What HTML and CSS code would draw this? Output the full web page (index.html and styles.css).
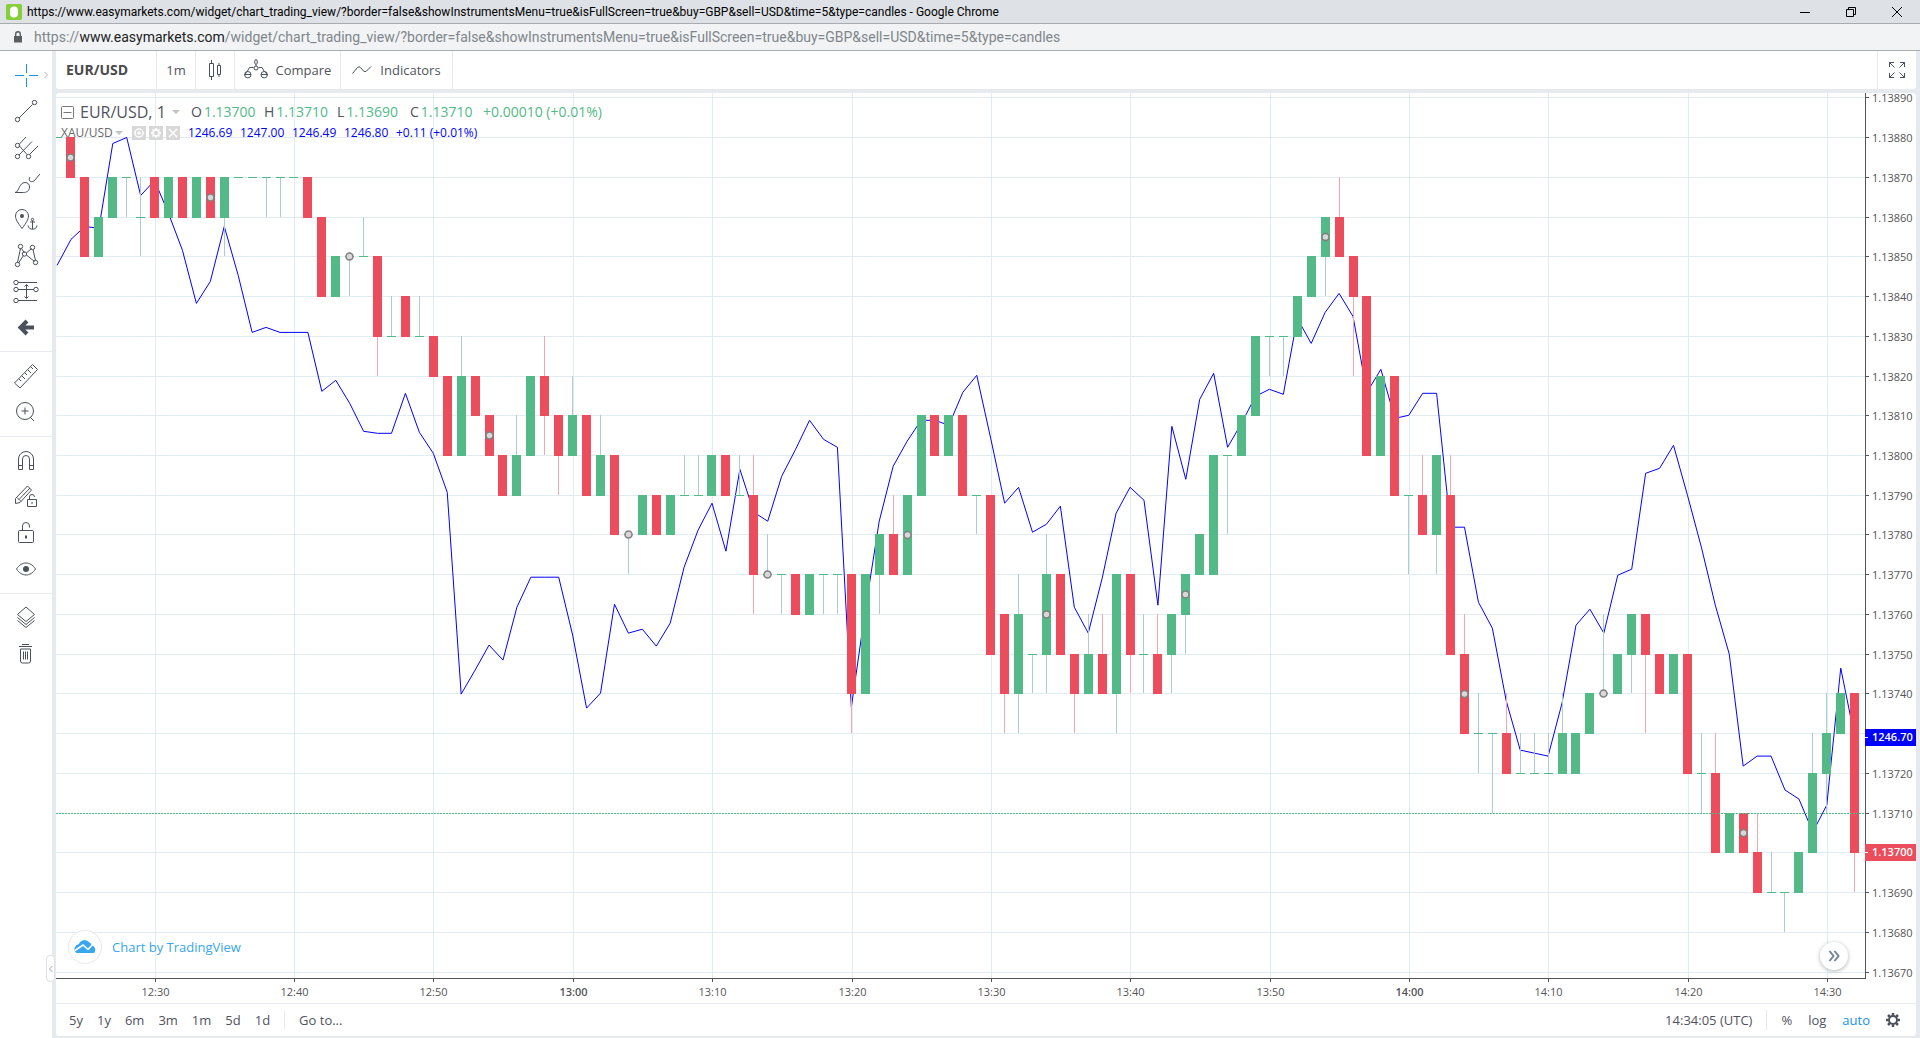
FILE: index.html
```html
<!DOCTYPE html>
<html lang="en">
<head>
<meta charset="utf-8">
<meta name="viewport" content="width=device-width, initial-scale=1">
<title>EUR/USD chart</title>
<link rel="stylesheet" href="styles.css">
</head>
<body>
<header class="titlebar">
  <svg class="favicon" viewBox="0 0 16 16"><rect width="16" height="16" rx="2" fill="#86cf3a"/><path d="M4 7a4 4 0 0 1 8-1v3a4 4 0 0 1-8 1z" fill="#fff"/></svg>
  <h1 class="window-title">https://www.easymarkets.com/widget/chart_trading_view/?border=false&amp;showInstrumentsMenu=true&amp;isFullScreen=true&amp;buy=GBP&amp;sell=USD&amp;time=5&amp;type=candles - Google Chrome</h1>
  <div class="window-controls">
    <button type="button" aria-label="Minimize"><svg width="12" height="12" viewBox="0 0 12 12"><path d="M1 6.5h10"/></svg></button>
    <button type="button" aria-label="Restore"><svg width="12" height="12" viewBox="0 0 12 12"><path d="M1.500 3.500h7v7h-7zM3.500 3.500v-2h7v7h-2"/></svg></button>
    <button type="button" aria-label="Close"><svg width="12" height="12" viewBox="0 0 12 12"><path d="M1 1l10 10M11 1L1 11"/></svg></button>
  </div>
</header>
<div class="addressbar">
  <svg class="padlock" width="10" height="12" viewBox="0 0 10 12"><path d="M1 5h8v6.500H1z" fill="#5a5d61"/><path d="M2.700 5V3a2.300 2.300 0 0 1 4.600 0v2" fill="none" stroke="#5a5d61" stroke-width="1.400"/></svg>
  <p class="url">https://<span class="domain">www.easymarkets.com</span>/widget/chart_trading_view/?border=false&amp;showInstrumentsMenu=true&amp;isFullScreen=true&amp;buy=GBP&amp;sell=USD&amp;time=5&amp;type=candles</p>
</div>

<div class="workspace">
  <nav class="tools" aria-label="Drawing tools">
    <div class="tool-group">
      <button type="button" class="active" aria-label="Cross"><svg viewBox="0 0 28 28"><path d="M14.500 3v9M14.500 17v9M3 14.500h9M17 14.500h9"/></svg><svg class="more" viewBox="0 0 4 8"><path d="M.5 1l3 3-3 3"/></svg></button>
      <button type="button" aria-label="Trend line"><svg viewBox="0 0 28 28"><path d="M7 21L20.500 7.500"/><circle cx="5.500" cy="22.500" r="2.200"/><circle cx="22.500" cy="5.500" r="2.200"/></svg></button>
      <button type="button" aria-label="Pitchfork"><svg viewBox="0 0 28 28"><path d="M7 22L20 8.500M7.500 11l6.500-7M18 21l8-8M7 12.500l8 9"/><circle cx="5.500" cy="12.500" r="2.200"/><circle cx="5.500" cy="23.500" r="2.200"/><circle cx="16.500" cy="23.500" r="2.200"/></svg></button>
      <button type="button" aria-label="Brush"><svg viewBox="0 0 28 28"><path d="M3 23.500c4 0 4-10 10-10 3 0 4.500 2 4.500 4.500 0 4-3 5.500-6 5.500zM18 8c-2 3 0 6 4 4l6-7"/></svg></button>
      <button type="button" aria-label="Text"><svg viewBox="0 0 28 28"><path d="M10 23.500C6 18 3.500 14.500 3.500 11a6.500 6.500 0 0 1 13 0c0 3.500-2.500 7-6.500 12.500zM20.500 15.500V24M18 17h5M16 20.500c.5 5 8.500 5 9 0"/><circle cx="20.500" cy="14.500" r="1.200"/><circle class="solid" cx="10" cy="11" r="2"/></svg></button>
      <button type="button" aria-label="Patterns"><svg viewBox="0 0 28 28"><path d="M5.500 21.500l3-14M6.500 22l5-7.500M9.500 7.500l3 4.500M14.500 12l5-4.500M14.500 14l8 6.500M21 8.500l2.500 11"/><circle cx="8.500" cy="5.500" r="2.200"/><circle cx="20.500" cy="6.500" r="2.200"/><circle cx="12.500" cy="13" r="2.200"/><circle cx="5.500" cy="23.500" r="2.200"/><circle cx="23.500" cy="21.500" r="2.200"/></svg></button>
      <button type="button" aria-label="Prediction"><svg viewBox="0 0 28 28"><path d="M6 5.500h19M6 12.500h16M6 23.500h19M14.500 8v13M12.500 9.500l2-2 2 2M12.500 19.500l2 2 2-2"/><circle cx="4" cy="5.500" r="2.200"/><circle cx="4" cy="12.500" r="2.200"/><circle cx="24" cy="12.500" r="2.200"/><circle cx="4" cy="23.500" r="2.200"/></svg></button>
      <button type="button" aria-label="Back"><svg viewBox="0 0 28 28"><path class="thick" d="M22 14.500H9M15 8l-6.500 6.500 6.500 6.500"/></svg></button>
    </div>
    <div class="tool-group">
      <button type="button" aria-label="Measure"><svg viewBox="0 0 28 28"><path d="M2.500 21L20.500 2.500l5 5L8 26zM7 17l2 2M10 14l3 3M13 11l2 2M16 8l3 3M19 5l2 2"/></svg></button>
      <button type="button" aria-label="Zoom in"><svg viewBox="0 0 28 28"><circle cx="13" cy="13" r="8.500"/><path d="M18 19l4 4M13 9.500v7M9.500 13h7"/></svg></button>
    </div>
    <div class="tool-group">
      <button type="button" aria-label="Magnet"><svg viewBox="0 0 28 28"><path d="M6.500 22.500V12a7.500 7.500 0 0 1 15 0v10.500h-4V12a3.500 3.500 0 0 0-7 0v10.500zM6.500 18.500h4M17.500 18.500h4"/></svg></button>
      <button type="button" aria-label="Lock drawing mode"><svg viewBox="0 0 28 28"><path d="M3.500 20.500v-5L15.500 3l4 4L8 19.500zM5 14.500l4 4M7 16.500L18 5M15.500 16.500h9v7h-9zM17.500 16.500V14a2.500 2.500 0 0 1 5 0M20 19v2"/></svg></button>
      <button type="button" aria-label="Lock all drawings"><svg viewBox="0 0 28 28"><rect x="6.500" y="11.500" width="15" height="12" rx="1"/><path d="M10.500 11.500V7a3.500 3.500 0 0 1 7 0v1.500"/><path class="bold" d="M14 16.500v3"/></svg></button>
      <button type="button" aria-label="Hide all drawings"><svg viewBox="0 0 28 28"><path d="M4.500 14c5-8 14-8 19 0-5 8-14 8-19 0z"/><circle class="solid" cx="14" cy="14" r="3"/></svg></button>
    </div>
    <div class="tool-group">
      <button type="button" aria-label="Object tree"><svg viewBox="0 0 28 28"><path d="M14 3l8.500 7.500L14 17.500 5.500 10.500zM5.500 13.500l8.500 7 8.500-7M5.500 16.500l8.500 7 8.500-7"/></svg></button>
      <button type="button" aria-label="Remove"><svg viewBox="0 0 28 28"><path d="M7 6.500h13M10 4.500h7M8.500 9v12a2 2 0 0 0 2 2h6a2 2 0 0 0 2-2V9zM11.500 11.500v8M13.500 11.500v8M15.500 11.500v8"/></svg></button>
    </div>
    <button type="button" class="collapse" aria-label="Collapse toolbar"><svg viewBox="0 0 4 8"><path d="M3.500 1l-3 3 3 3"/></svg></button>
  </nav>

  <main class="chart-area">
    <div class="toolbar">
      <button type="button" class="symbol">EUR/USD</button>
      <button type="button" class="interval">1m</button>
      <button type="button" class="style" aria-label="Candles"><svg width="14" height="20" viewBox="0 0 14 20"><path d="M1.500 3.500h4v13h-4zM3.500 0v3.500M3.500 16.500V20M9.500 5.500h3v9h-3zM11 3v2.500M11 14.500V17"/></svg></button>
      <button type="button" class="compare"><svg width="24" height="22" viewBox="0 0 24 22"><path d="M12 5.500V7M3.500 12l2-3.500h4M20 12l-2-3.500h-3.500M.5 15.500h6.500M17 15.500h6.500M3.500 12L.8 15.500M20.500 12l2.700 3.500"/><ellipse cx="12" cy="3" rx="1.300" ry="2.500"/><circle cx="12" cy="9" r="2"/><circle cx="3.800" cy="15.700" r="3.200"/><circle cx="20.200" cy="15.700" r="3.200"/></svg>Compare</button>
      <button type="button" class="indicators"><svg width="20" height="10" viewBox="0 0 20 10"><path d="M.5 8.500l5-6q1.500-1.500 3 0l3 3.500q1.500 1.500 3 0L19 1.500"/></svg>Indicators</button>
      <button type="button" class="fullscreen" aria-label="Fullscreen"><svg width="16" height="16" viewBox="0 0 16 16"><path d="M.5 5V.5H5M.5.5l5 5M11 .5h4.500V5M15.500.5l-5 5M.5 11v4.500H5M.5 15.500l5-5M11 15.500h4.500V11M15.500 15.500l-5-5"/></svg></button>
    </div>

    <div class="pane">
      <div class="plot">
        <svg id="chart" role="img" aria-label="EUR/USD one minute candles with XAU/USD line"></svg>
        <div class="legend">
          <div class="series main">
            <button type="button" class="fold" aria-label="Collapse legend"><svg width="13" height="13" viewBox="0 0 13 13"><rect x=".5" y=".5" width="12" height="12" rx="1"/><path d="M2.500 6.500h8"/></svg></button>
            <span class="name">EUR/USD, 1</span><span class="caret"></span>
            <span class="ohlc">O<b>1.13700</b></span><span class="ohlc">H<b>1.13710</b></span><span class="ohlc">L<b>1.13690</b></span><span class="ohlc">C<b>1.13710</b></span><b>+0.00010 (+0.01%)</b>
          </div>
          <div class="series compare-series">
            <span class="name">XAU/USD</span><span class="caret"></span>
            <span class="actions">
              <button type="button" aria-label="Hide"><svg viewBox="0 0 14 14"><circle cx="7" cy="7" r="4"/><circle cx="7" cy="7" r="1"/></svg></button>
              <button type="button" aria-label="Settings"><svg viewBox="0 0 14 14"><circle cx="7" cy="7" r="3"/><path d="M7 2v2M7 10v2M2 7h2M10 7h2M3.500 3.500l1.500 1.500M9 9l1.500 1.500M10.500 3.500L9 5M5 9l-1.500 1.500"/></svg></button>
              <button type="button" aria-label="Remove"><svg viewBox="0 0 14 14"><path d="M3 3l8 8M11 3l-8 8"/></svg></button>
            </span>
            <span class="value">1246.69</span><span class="value">1247.00</span><span class="value">1246.49</span><span class="value">1246.80</span><span>+0.11 (+0.01%)</span>
          </div>
        </div>
        <a class="credit" href="#"><svg class="badge" viewBox="0 0 34 34"><circle cx="17" cy="17" r="16.500" fill="#fff" stroke="#e6e8ea"/><path d="M8.500 23a5 5 0 0 1-1.500-6 5 5 0 0 1 4-3 6 6 0 0 1 10-2 6 6 0 0 1 3 3.500 4.500 4.500 0 0 1 2 7.500z" fill="#37a6ef"/><path d="M7 20.500l8-5.500 5 4.500 6-6.500" fill="none" stroke="#fff" stroke-width="1.600"/></svg>Chart by TradingView</a>
        <button type="button" class="latest" aria-label="Scroll to latest bar"><svg width="12" height="12" viewBox="0 0 12 12"><path d="M1.500 1l4 5-4 5M6.500 1l4 5-4 5"/></svg></button>
      </div>
      <div class="bottombar">
        <div class="ranges">
          <button type="button">5y</button><button type="button">1y</button><button type="button">6m</button><button type="button">3m</button><button type="button">1m</button><button type="button">5d</button><button type="button">1d</button>
        </div>
        <button type="button" class="goto">Go to...</button>
        <time class="clock">14:34:05 (UTC)</time>
        <div class="scale">
          <button type="button">%</button><button type="button">log</button><button type="button" class="on">auto</button>
          <button type="button" aria-label="Chart settings"><svg width="14" height="14" viewBox="0 0 14 14"><circle cx="7" cy="7" r="4" stroke-width="2"/><path stroke-width="2.500" d="M7 0v2.500M7 11.500V14M0 7h2.500M11.500 7H14M2 2l1.900 1.900M10.100 10.100L12 12M12 2l-1.900 1.900M3.900 10.100L2 12"/></svg></button>
        </div>
      </div>
    </div>
  </main>
</div>
<script src="chart.js"></script>
</body>
</html>
```
FILE: styles.css
```css
* { box-sizing: border-box; }

body {
  margin: 0;
  height: 100vh;
  display: flex;
  flex-direction: column;
  overflow: hidden;
  background: #e6eaee;
  color: #50535e;
  font: 13px/20px "Open Sans", "Noto Sans", sans-serif;
}

button {
  margin: 0;
  padding: 0;
  border: 0;
  background: none;
  color: inherit;
  font: inherit;
  display: flex;
  align-items: center;
  justify-content: center;
}

svg { display: block; flex: none; }
button svg { fill: none; stroke: #4a505c; }

/* Browser window */
.titlebar {
  flex: none;
  height: 24px;
  display: flex;
  align-items: center;
  gap: 5px;
  padding-left: 6px;
  background: #dee1e6;
  border-bottom: 1px solid #a9abae;
}
.favicon { width: 16px; height: 16px; }
.window-title {
  flex: 1;
  margin: 0;
  overflow: hidden;
  white-space: nowrap;
  font: 400 12px/20px Roboto, "Open Sans", sans-serif;
  color: #000;
}
.window-controls { display: flex; }
.window-controls button { width: 46px; height: 20px; }
.window-controls svg { stroke: #000; }

.addressbar {
  flex: none;
  height: 27px;
  display: flex;
  align-items: center;
  gap: 11px;
  padding-left: 13px;
  background: #f1f3f4;
  border-bottom: 1px solid #a9abae;
}
.url {
  margin: 0;
  white-space: nowrap;
  overflow: hidden;
  color: #80868b;
  font: 14px/20px Roboto, "Open Sans", sans-serif;
}
.domain { color: #202124; }

/* Chart widget */
.workspace { flex: 1; min-height: 0; display: flex; gap: 4px; }

.tools {
  position: relative;
  flex: none;
  width: 52px;
  background: #fff;
}
.tool-group { padding: 6px 0; border-bottom: 1px solid #e6eaee; }
.tool-group:nth-of-type(4) { border-bottom: 0; }
.tool-group button { position: relative; width: 52px; height: 36px; }
.tool-group svg { width: 28px; height: 28px; }
.tool-group .active svg { stroke: #1592e6; }
.tool-group .active .more {
  position: absolute;
  right: 4px;
  width: 4px;
  height: 8px;
  stroke: #b4b8bf;
}
.tools .solid { fill: #4a505c; stroke: none; }
.tools .bold { stroke-width: 2; }
.tools .thick { stroke-width: 4; }
.collapse {
  position: absolute;
  right: -3px;
  bottom: 56px;
  width: 9px;
  height: 27px;
  background: #fff;
  border: 1px solid #dde1e5;
  border-radius: 4px;
}
.collapse svg { width: 4px; height: 8px; stroke: #a0a5ad; }

.chart-area {
  flex: 1;
  min-width: 0;
  display: flex;
  flex-direction: column;
  gap: 4px;
  padding: 0 4px 2px 0;
}

.toolbar {
  flex: none;
  height: 38px;
  display: flex;
  background: #fff;
  border-radius: 0 0 3px 3px;
}
.toolbar button {
  gap: 8px;
  border-right: 1px solid #e6eaee;
}
.toolbar .symbol {
  width: 101px;
  padding-left: 10px;
  justify-content: flex-start;
  font-size: 14px;
  font-weight: 700;
  color: #4a4a4a;
}
.toolbar .interval,
.toolbar .style { width: 39px; }
.toolbar .compare { width: 106px; }
.toolbar .indicators { width: 112px; }
.toolbar .fullscreen {
  width: 39px;
  margin-left: auto;
  border-right: 0;
  border-left: 1px solid #e6eaee;
}

.pane {
  flex: 1;
  min-height: 0;
  display: flex;
  flex-direction: column;
  background: #fff;
  border-radius: 3px;
}
.plot { position: relative; flex: 1; min-height: 0; overflow-x: clip; overflow-y: visible; }
#chart { position: absolute; inset: 0; width: 100%; height: 100%; overflow: visible; }

#chart .grid { stroke: #e1ecf2; }
#chart .line { fill: none; stroke: #0000ff; }
#chart .up { fill: #53b987; }
#chart .down { fill: #eb4d5c; }
#chart .wick-up { fill: #a9cdd3; }
#chart .wick-down { fill: #f5a6ae; }
#chart .dot { fill: #d8d8d8; stroke: #808080; stroke-width: 1.5; }
#chart .axis { stroke: #555; }
#chart .last { stroke: #53b987; stroke-dasharray: 2 1; }
#chart text { font-size: 11px; fill: #555; }
#chart .hour { font-weight: 600; }
#chart .tag-line { fill: #0000ff; }
#chart .tag-last { fill: #eb4d5c; }
#chart .tick { stroke: #fff; }
#chart .tag-text { fill: #fff; font-weight: 600; }

/* Series legend, above the candles */
.legend { position: absolute; top: 8px; left: 5px; }
.series { display: flex; align-items: center; white-space: nowrap; }
.main { height: 22px; font-size: 14px; }
.main .name { width: 92px; margin-left: 6px; font-size: 16px; }
.main b { font-weight: 400; color: #53b987; }
.main .caret { margin-right: 11px; }
.ohlc { width: 73px; display: flex; gap: 2px; }
.fold svg { stroke: #787878; }
.caret {
  width: 7px;
  border: 4px solid transparent;
  border-top-color: #c3c3c3;
  border-bottom: 0;
}
.compare-series { height: 20px; font-size: 12px; color: #0000ff; }
.compare-series .name { width: 54px; color: #6a6a6a; }
.actions { display: flex; gap: 3px; margin: 0 8px 0 9px; }
.actions button { width: 14px; height: 14px; background: #d8d8d8; }
.actions svg { width: 14px; height: 14px; stroke: #fff; stroke-width: 1.500; }
.value { width: 52px; }

.credit {
  position: absolute;
  left: 12px;
  bottom: 39px;
  display: flex;
  align-items: center;
  gap: 10px;
  color: #37a6ef;
  text-decoration: none;
}
.badge { width: 34px; height: 34px; }
.latest {
  position: absolute;
  right: 68px;
  bottom: 33px;
  width: 28px;
  height: 28px;
  border-radius: 50%;
  background: #fff;
  box-shadow: 0 1px 4px rgba(0, 0, 0, .3);
}
.latest svg { stroke: #758696; stroke-width: 2; }

.bottombar {
  flex: none;
  height: 33px;
  display: flex;
  align-items: center;
  padding: 0 16px 0 13px;
  border-top: 1px solid #e6eaee;
}
.ranges, .scale { display: flex; gap: 16px; }
.ranges { gap: 14px; padding-right: 14px; border-right: 1px solid #e6eaee; }
.goto { margin-left: 14px; }
.clock { margin-left: auto; padding-right: 14px; border-right: 1px solid #e6eaee; }
.scale { padding-left: 14px; }
.on { color: #1592e6; }
```
FILE: chart.js
```js
const STEP = 13.935;         // pixels per minute
const RIGHT_EDGE = 51;       // width of the price scale
const BOTTOM_EDGE = 25;      // height of the time scale
const TOP_PRICE = 113890;    // price of the first grid row, in points
const ROWS = 22;

// One entry per minute from 12:23: direction, body top, body bottom, then high
// and low where there is a wick. Values are grid rows below TOP_PRICE.
const candles = `
G1,1 R1,2 R2,4 G3,4 G2,3 G2,2,2,3 G3,3,2,4 R2,3 G2,3 R2,3 G2,3 R2,3 G2,3,2,4
G2,2 G2,2 G2,2,2,3 G2,2,2,3 G2,2 R2,3 R3,5 G4,5 G4,4,4,5 G4,4,3,4 R4,6,4,7
G6,6,5,6 R5,6 G6,6,5,6 R6,7 R7,9 G7,9,6,9 R7,8 R8,9 R9,10 G9,10,8,10 G7,9
R7,8,6,9 R8,9,8,10 G8,9,7,9 R8,10 G9,10,8,10 R9,11 G11,11,11,12 G10,11 R10,11
G10,11 G10,10,9,10 G10,10,9,10 G9,10 R9,10 G10,10,9,10 R10,12,9,13 G12,12,11,12
G12,12,12,13 R12,13 G12,13 G12,12,12,13 G12,12,12,13 R12,15,12,16 G12,15
G11,12,11,13 R11,12,10,12 G10,12 G8,10 R8,9 G8,9 R8,10 G10,10,10,11 R10,14
R13,15,13,16 G13,15,12,16 G14,14,14,15 G12,14,11,15 R12,14 R14,15,14,16
G14,15,13,15 R14,15,13,15 G12,15,12,16 R12,14,12,15 G14,14,13,15 R14,15,13,15
G13,14,13,15 G12,13,12,14 G11,12 G9,12 G9,9,9,11 G8,9 G6,8 G6,6,6,7 G6,6,6,7
G5,6 G4,5 G3,4,3,5 R3,4,2,4 R4,5,4,7 R5,9 G7,9 R7,10 G10,10,10,12 R10,11,9,11
G9,11,9,12 R10,14,9,14 R14,16,13,16 G16,16,15,17 G16,16,16,18 R16,17,15,17
G17,17,16,17 G17,17,16,17 G17,17,16,17 G16,17,15,17 G16,17 G15,16 G15,15,13,15
G14,15 G13,14,13,15 R13,14,13,16 R14,15 G14,15 R14,17 G17,17,16,18 R17,19,16,19
G18,19 R18,19 R19,20,18,20 G20,20,19,20 G20,20,20,21 G19,20 G17,19,16,19
G16,17,15,18 G15,16 R15,19,15,20`.trim().split(/\s+/).map(s => [s[0], ...s.slice(1).split(',').map(Number)]);

// XAU/USD closes for the same minutes, scaled onto the grid rows.
const closes = [265, 239, 226, 228, 143, 137, 195, 180, 213, 250, 303, 281, 226, 275, 332, 327, 332, 332, 332, 391, 380,
  403, 431, 433, 433, 393, 432, 453, 492, 694, 670, 645, 660, 607, 577, 577, 577, 635, 708, 693, 604, 633, 629, 646,
  623, 567, 530, 503, 551, 469, 512, 521, 476, 449, 420, 439, 447, 707, 610, 521, 466, 441, 420, 420, 425, 392, 375,
  438, 503, 487, 532, 524, 506, 607, 633, 578, 513, 487, 500, 605, 426, 479, 399, 373, 447, 423, 396, 389, 394, 318,
  343, 312, 293, 316, 392, 369, 418, 415, 393, 393, 527, 527, 602, 628, 701, 750, 753, 756, 703, 625, 609, 633, 575,
  569, 473, 468, 445, 495, 547, 605, 654, 766, 756, 756, 790, 799, 832, 805, 668, 737].map(v => (v - 97.3) / 39.77);

const svg = document.getElementById('chart');

function add(name, attrs, text) {
  const node = document.createElementNS('http://www.w3.org/2000/svg', name);
  for (const key in attrs) node.setAttribute(key, attrs[key]);
  if (text) node.textContent = text;
  svg.append(node);
}
const line = (cls, x1, y1, x2, y2) => add('line', { class: cls, x1, y1, x2, y2 });
const rect = (cls, x, y, width, height) => add('rect', { class: cls, x, y, width, height });

function draw() {
  svg.replaceChildren();
  const { width: w, height: h } = svg.getBoundingClientRect();
  const right = Math.round(w) - RIGHT_EDGE;
  const bottom = Math.round(h) - BOTTOM_EDGE;
  const exact = row => 4.84 + row * (bottom - 10.7) / ROWS;
  const y = row => Math.floor(exact(row));
  const x = minute => right - 1710.4 + minute * STEP;

  for (let row = 0; row <= ROWS; row++) line('grid', 0, y(row) + .5, right, y(row) + .5);
  const ticks = [];
  for (let m = 0; x(m) < right; m += 10) ticks.push(m);
  ticks.forEach(m => {
    const gx = Math.floor(x(m) + .7) + .5;
    line('grid', gx, 0, gx, bottom);
  });

  add('polyline', { class: 'line', points: closes.map((v, i) => `${x(i - 7)},${exact(v).toFixed(1)}`).join(' ') });

  candles.forEach(([dir, top, low, high, deep], i) => {
    const cx = Math.floor(x(i - 7));
    const kind = dir === 'G' ? 'up' : 'down';
    if (high !== undefined) rect('wick-' + kind, cx, y(high), 1, y(deep) - y(high));
    rect(kind, cx - 4, y(top), 9, y(low) - y(top) + 1);
    if (i % 10 === 1 && i < 125) add('circle', { class: 'dot', cx: cx + .5, cy: (y(top) + y(low)) / 2 + .5, r: 3.5 });
  });

  line('last', 0, y(18) + .5, right, y(18) + .5);
  line('axis', right + .5, 0, right + .5, bottom + 1);
  line('axis', 0, bottom + .5, right + 1, bottom + .5);

  for (let row = 0; row <= ROWS; row++) {
    if (row === 16 || row === 19) continue;
    line('axis', right + 1, y(row) + .5, right + 4, y(row) + .5);
    add('text', { x: right + 7, y: y(row) + 5 }, ((TOP_PRICE - row * 10) / 1e5).toFixed(5));
  }
  ticks.forEach(m => {
    const gx = Math.floor(x(m) + .7) + .5;
    const clock = 750 + m;
    line('axis', gx, bottom + 1, gx, bottom + 4);
    add('text', { x: gx, y: bottom + 18, 'text-anchor': 'middle', class: clock % 60 ? '' : 'hour' },
      `${Math.floor(clock / 60)}:${String(clock % 60).padStart(2, '0')}`);
  });

  [['tag-line', y(closes[closes.length - 1]), '1246.70'], ['tag-last', y(19), '1.13700']].forEach(([cls, ty, label]) => {
    rect(cls, right, ty - 8, RIGHT_EDGE, 17);
    line('tick', right, ty + .5, right + 3, ty + .5);
    add('text', { x: right + 7, y: ty + 4, class: 'tag-text' }, label);
  });
}

draw();
window.addEventListener('resize', draw);
```
